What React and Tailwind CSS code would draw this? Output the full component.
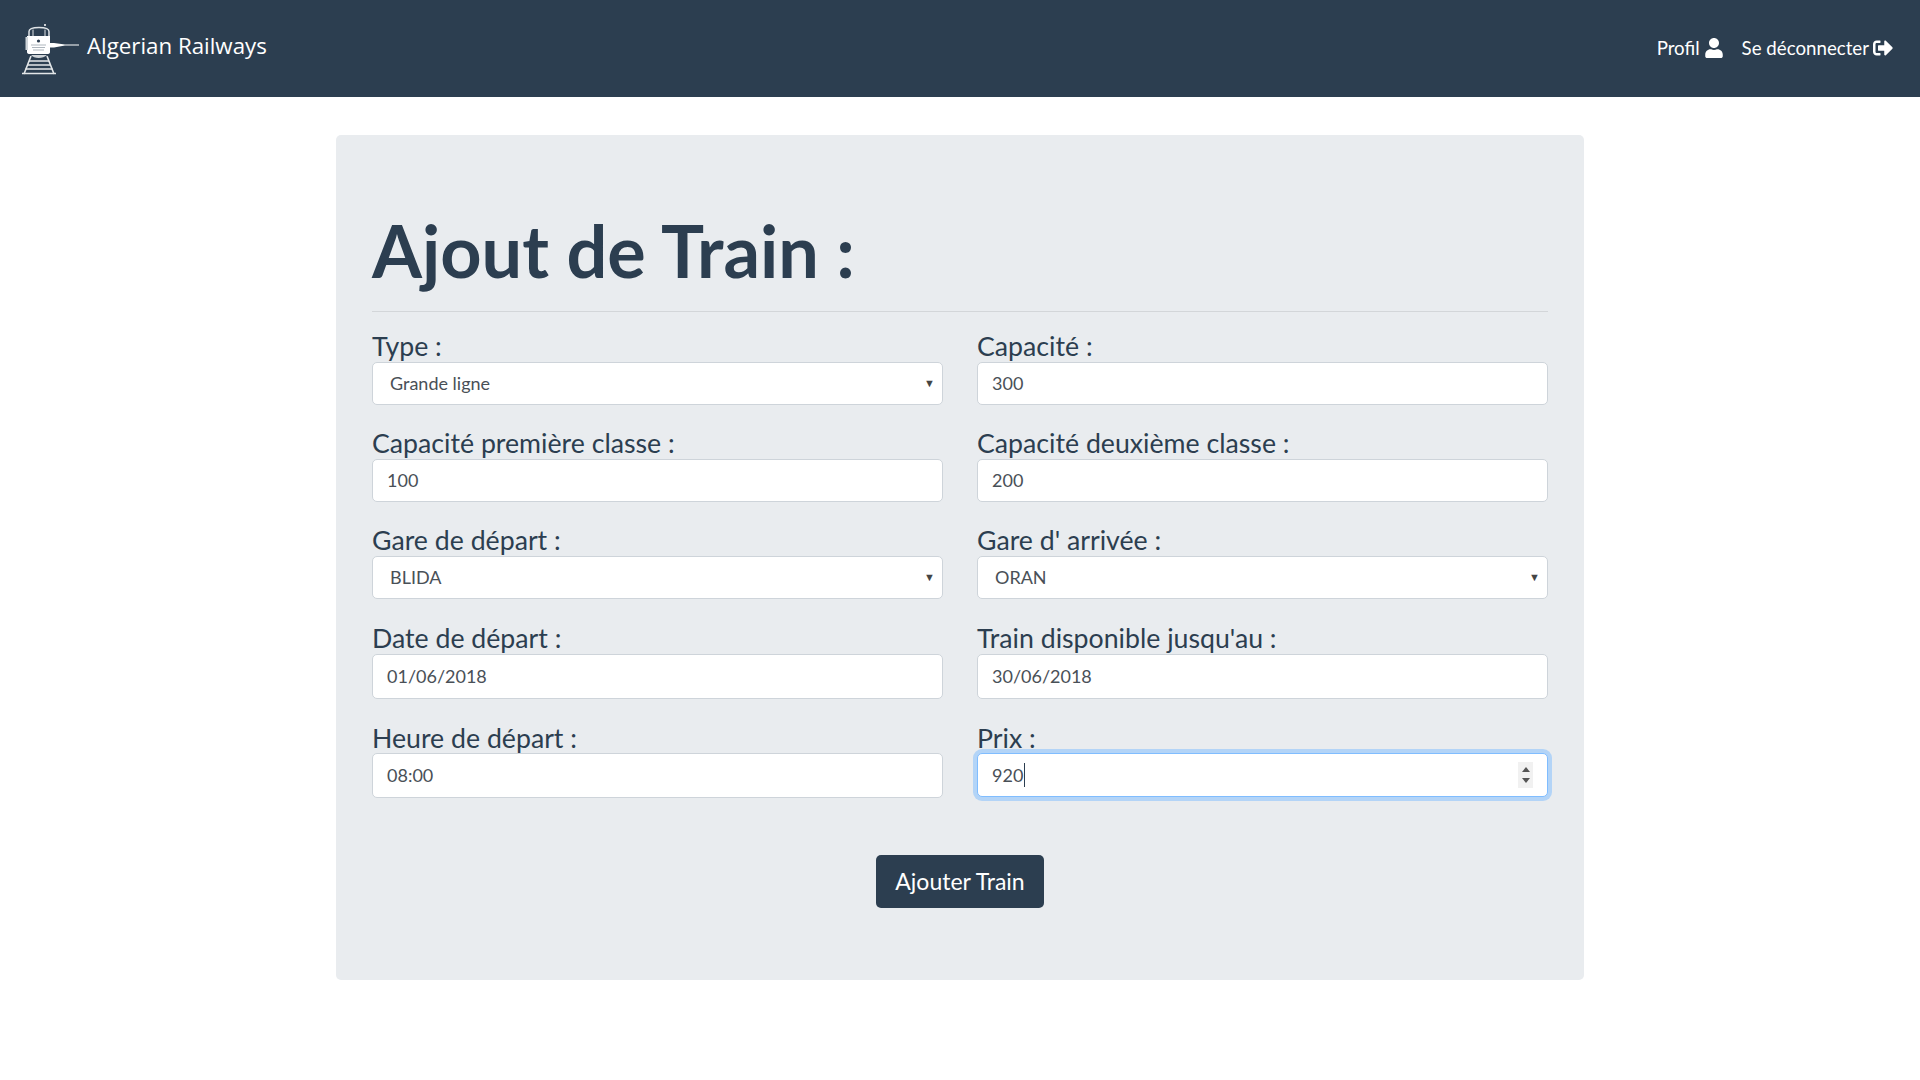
import { FaUser, FaSignOutAlt } from "react-icons/fa";

// Train logo, drawn from the front with the track running towards the viewer
function TrainLogo() {
  return (
    <svg width="60" height="52" viewBox="0 0 60 52" fill="none" className="shrink-0">
      <circle cx="25" cy="2" r="1" fill="#fff" />
      <path d="M9 14V8.5C9 6 12 4.5 19 4.5S29 6 29 8.5V14" stroke="#dfe3e6" strokeWidth="1.5" />
      <path d="M13 6.5V13M25 6.5V13" stroke="#dfe3e6" strokeWidth="1" />
      <path d="M7 13H30V29C30 30.5 29 31 27 31H10C8 31 7 30.5 7 29Z" fill="#fff" />
      <circle cx="18.5" cy="18" r="1.6" fill="#2c3e50" />
      <path d="M11 22H26M12 24.5H25M13 27H24" stroke="#aeb6bd" strokeWidth="1" />
      <path d="M8 14 H5.5 V27 H8Z" fill="#cfd4d8" />
      <path d="M30 20H34L45 21.5H59V22.5H45L34 24.5H30Z" fill="#fff" />
      <path d="M11 32C14 36 23 36 27 32Z" fill="#cfd4d8" />
      <path d="M11 33L4 51M27 33L34 51" stroke="#e3e6e8" strokeWidth="1.6" />
      <path d="M9 38H29M7.5 42H30.5M5.5 46H32.5M2 50.5H36" stroke="#e3e6e8" strokeWidth="1.6" />
    </svg>
  );
}

// Up and down arrows of the number input
function Spinner() {
  return (
    <span className="ml-auto flex h-[26px] w-[15px] flex-col items-center justify-center gap-[6px] bg-[#f1f1f1]">
      <svg width="8" height="5" viewBox="0 0 8 5" fill="#555">
        <path d="M4 0L8 5H0Z" />
      </svg>
      <svg width="8" height="5" viewBox="0 0 8 5" fill="#555">
        <path d="M0 0H8L4 5Z" />
      </svg>
    </span>
  );
}

function Field({ label, value, select, focused, tall, spaced }) {
  return (
    <div className="min-w-0">
      <label
        className={
          "block text-[26.7px] text-[#2c3e50] " +
          (tall ? "leading-[32px] " : "leading-[30px] ") +
          (spaced ? "h-[32px]" : "h-[31px]")
        }
      >
        {label}
      </label>
      <div
        className={
          "flex items-center bg-white rounded-[5px] border text-[18px] text-[#495057] " +
          (focused ? "h-[44px] " : tall ? "h-[45px] " : "h-[43px] ") +
          (focused
            ? "border-[#80bdff] ring-[4px] ring-[#b3d4f7]"
            : "border-[#ced4da]") +
          (select ? " pl-[17px] pr-[7px]" : " pl-[14px] pr-[14px]")
        }
      >
        <span className={focused ? "border-r border-[#2c3e50] pr-[0.5px] leading-[24px]" : ""}>{value}</span>
        {select && <span className="ml-auto text-[11px] text-[#444]">▼</span>}
        {focused && <Spinner />}
      </div>
    </div>
  );
}

export default function App() {
  return (
    <div className="min-h-[1080px] bg-white font-['Lato',sans-serif] text-[#2c3e50]">
      <nav className="flex h-[97px] items-center justify-between bg-[#2c3e50] pl-[20px] pr-[27px] text-white">
        <div className="flex items-center gap-[7px]">
          <TrainLogo />
          <span className="mt-[-6px] font-['Open_Sans',sans-serif] text-[22.3px]">Algerian Railways</span>
        </div>
        <div className="flex items-center gap-[18px] text-[18.7px]">
          <a className="flex items-center gap-[4px]">
            Profil <FaUser size={20} />
          </a>
          <a className="flex items-center gap-[4px]">
            Se déconnecter <FaSignOutAlt size={20} />
          </a>
        </div>
      </nav>

      <main className="mx-auto mt-[38px] h-[845px] w-[1248px] rounded-[5px] bg-[#e9ecef] px-[36px] pt-[71px]">
        <h1 className="text-[72px] font-bold leading-[88px]">Ajout de Train :</h1>
        <hr className="mt-[17px] border-[#d3d6d9]" />
        <form className="mt-[19px]">
          <div className="grid grid-cols-2 gap-x-[34px] gap-y-[23px]">
            <Field label="Type :" value="Grande ligne" select />
            <Field label="Capacité :" value="300" />
            <Field label="Capacité première classe :" value="100" />
            <Field label="Capacité deuxième classe :" value="200" />
            <Field label="Gare de départ :" value="BLIDA" select />
            <Field label="Gare d' arrivée :" value="ORAN" select />
            <Field label="Date de départ :" value="01/06/2018" tall spaced />
            <Field label="Train disponible jusqu'au :" value="30/06/2018" tall spaced />
            <Field label="Heure de départ :" value="08:00" tall />
            <Field label="Prix :" value="920" tall focused />
          </div>
          <div className="mt-[57px] flex justify-center">
            <button
              type="button"
              className="h-[53px] w-[168px] rounded-[5px] bg-[#2c3e50] text-[23px] text-white"
            >
              Ajouter Train
            </button>
          </div>
        </form>
      </main>
    </div>
  );
}
